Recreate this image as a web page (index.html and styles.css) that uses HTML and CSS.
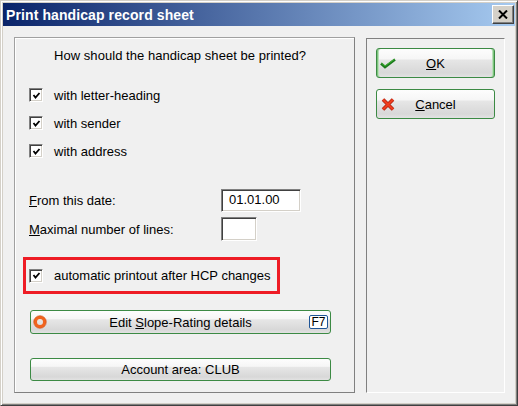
FILE: index.html
```html
<!DOCTYPE html>
<html lang="en">
<head>
  <meta charset="UTF-8" />
  <title>Print handicap record sheet</title>
  <link rel="stylesheet" href="styles.css">
</head>
<body>

  <div class="window">
    <div class="titlebar">
      <span class="title">Print handicap record sheet</span>
      <button class="close-btn" aria-label="Close">
        <svg width="10" height="9" viewBox="0 0 10 9">
          <path d="M1 0.5 L9 8.5 M9 0.5 L1 8.5" stroke="#000" stroke-width="2" fill="none"/>
        </svg>
      </button>
    </div>

    <div class="content">
      <div class="panel panel-main">
        <div class="question">How should the handicap sheet be printed?</div>

        <div class="options">
          <label class="check-row">
            <span class="checkbox"><svg width="9" height="9" viewBox="0 0 9 9"><path d="M1.5 4 L3.5 6.5 L7.5 2" stroke="#000" stroke-width="1.8" fill="none"/></svg></span>
            with letter-heading
          </label>
          <label class="check-row">
            <span class="checkbox"><svg width="9" height="9" viewBox="0 0 9 9"><path d="M1.5 4 L3.5 6.5 L7.5 2" stroke="#000" stroke-width="1.8" fill="none"/></svg></span>
            with sender
          </label>
          <label class="check-row">
            <span class="checkbox"><svg width="9" height="9" viewBox="0 0 9 9"><path d="M1.5 4 L3.5 6.5 L7.5 2" stroke="#000" stroke-width="1.8" fill="none"/></svg></span>
            with address
          </label>
        </div>

        <div class="field-row field-date">
          <span class="field-label"><u>F</u>rom this date:</span>
          <span class="input input-date">01.01.00</span>
        </div>
        <div class="field-row field-lines">
          <span class="field-label"><u>M</u>aximal number of lines:</span>
          <span class="input input-lines"></span>
        </div>

        <div class="highlight">
          <label class="check-row">
            <span class="checkbox"><svg width="9" height="9" viewBox="0 0 9 9"><path d="M1.5 4 L3.5 6.5 L7.5 2" stroke="#000" stroke-width="1.8" fill="none"/></svg></span>
            automatic printout after HCP changes
          </label>
        </div>

        <button class="btn btn-wide btn-slope">
          <svg class="ring" width="14" height="14" viewBox="0 0 14 14">
            <circle cx="7" cy="7" r="4.6" stroke="#f0641e" stroke-width="3.2" fill="none"/>
            <circle cx="7" cy="7" r="6.3" stroke="#d24a12" stroke-width="0.6" fill="none"/>
          </svg>
          <span>Edit <u>S</u>lope-Rating details</span>
          <span class="key">F7</span>
        </button>

        <button class="btn btn-wide btn-account">Account area: CLUB</button>
      </div>

      <div class="panel panel-side">
        <button class="btn btn-side btn-ok">
          <svg class="btn-icon" width="16" height="11" viewBox="0 0 16 11">
            <path d="M1 5.5 L5 9 L15 1.5" stroke="#1b7a1b" stroke-width="2.6" fill="none"/>
            <path d="M1.5 5.2 L5 8 L14.5 1.2" stroke="#4cbf3c" stroke-width="0.8" fill="none"/>
          </svg>
          <span><u>O</u>K</span>
        </button>
        <button class="btn btn-side btn-cancel">
          <svg class="btn-icon" width="14" height="13" viewBox="0 0 14 13">
            <path d="M2 1.5 L12 11.5 M12 1.5 L2 11.5" stroke="#a82010" stroke-width="3.6" fill="none"/>
            <path d="M2 1.5 L12 11.5 M12 1.5 L2 11.5" stroke="#f03c1c" stroke-width="2.2" fill="none"/>
          </svg>
          <span><u>C</u>ancel</span>
        </button>
      </div>
    </div>
  </div>

</body>
</html>
```

FILE: styles.css
```css
html, body {
  margin: 0;
  padding: 0;
}
body {
  font-family: "Liberation Sans", Arial, sans-serif;
  font-size: 13px;
  color: #000;
  background: #f0f0f0;
}
.window {
  box-sizing: border-box;
  width: 518px;
  height: 406px;
  display: flex;
  flex-direction: column;
  background: #f0f0f0;
  border-top: 1px solid #d4d0c8;
  border-left: 1px solid #d4d0c8;
  border-right: 1px solid #404040;
  border-bottom: 1px solid #404040;
  box-shadow: inset 1px 1px #fff, inset -1px -1px #808080, inset 2px 2px #d4d0c8, inset -2px -2px #d4d0c8;
  padding: 2px;
}
.titlebar {
  height: 23px;
  display: flex;
  align-items: center;
  justify-content: space-between;
  background: linear-gradient(to right, #0a246a, #a6caf0);
  padding: 0 1px 0 3px;
}
.title {
  color: #fff;
  font-weight: bold;
  font-size: 14px;
  letter-spacing: 0.1px;
}
.close-btn {
  box-sizing: border-box;
  width: 22px;
  height: 19px;
  padding: 0;
  margin: 0;
  display: flex;
  align-items: center;
  justify-content: center;
  background: #d4d0c8;
  border: 1px solid;
  border-color: #fff #404040 #404040 #fff;
  box-shadow: inset -1px -1px #808080;
}
.content {
  flex: 1;
  display: flex;
  gap: 11px;
  padding: 11px 10px 10px 11px;
}
.panel {
  box-sizing: border-box;
  border: 1px solid;
  border-color: #a0a0a0 #808080 #808080 #a0a0a0;
  box-shadow: inset 1px 1px #fff;
}
.panel-main {
  width: 341px;
  padding: 10px 0 0 14px;
  display: flex;
  flex-direction: column;
}
.panel-side {
  width: 139px;
  margin-top: 1px;
  border-color: #808080 #fff #fff #808080;
  box-shadow: none;
  padding: 9px 0 0 9px;
  display: flex;
  flex-direction: column;
  gap: 11px;
}
.question {
  line-height: 16px;
  padding-left: 25px;
  letter-spacing: 0.05px;
}
.options {
  display: flex;
  flex-direction: column;
  gap: 14px;
  margin-top: 24px;
}
.check-row {
  display: flex;
  align-items: center;
  gap: 11px;
  height: 14px;
}
.checkbox {
  box-sizing: border-box;
  width: 14px;
  height: 14px;
  display: flex;
  align-items: center;
  justify-content: center;
  background: #fff;
  border: 1px solid;
  border-color: #808080 #fff #fff #808080;
  box-shadow: inset 1px 1px #404040, inset -1px -1px #d4d0c8;
}
.field-row {
  display: flex;
  align-items: center;
}
.field-label {
  width: 192px;
}
.field-date {
  margin-top: 31px;
}
.field-lines {
  margin-top: 5px;
}
.input {
  box-sizing: border-box;
  background: #fff;
  border: 1px solid;
  border-color: #808080 #fff #fff #808080;
  box-shadow: inset 1px 1px #404040, inset -1px -1px #d4d0c8;
  padding: 0 0 0 7px;
  line-height: 20px;
}
.input-date {
  width: 80px;
  height: 23px;
}
.input-lines {
  width: 36px;
  height: 24px;
}
.highlight {
  box-sizing: border-box;
  width: 257px;
  height: 37px;
  margin: 16px 0 0 -6px;
  border: 3px solid #ee1c25;
  padding: 0 0 0 3px;
  display: flex;
  align-items: center;
}
.btn {
  box-sizing: border-box;
  font-family: "Liberation Sans", Arial, sans-serif;
  font-size: 13px;
  color: #000;
  border: 1px solid #3c8a44;
  border-radius: 3px;
  background: linear-gradient(to bottom, #fdfdfd 0%, #f6f6f6 35%, #e6e6e6 40%, #d8d8d8 85%, #e2e2e2 100%);
  padding: 0;
  margin: 0;
  display: flex;
  align-items: center;
  justify-content: center;
  position: relative;
}
.btn-wide {
  width: 301px;
  margin-left: 1px;
}
.btn-slope {
  height: 24px;
  margin-top: 16px;
}
.btn-account {
  height: 23px;
  margin-top: 24px;
}
.ring {
  position: absolute;
  left: 2px;
  top: 4px;
}
.key {
  position: absolute;
  right: 2px;
  top: 4px;
  box-sizing: border-box;
  width: 19px;
  height: 14px;
  border: 1px solid #1f5597;
  border-radius: 2px;
  background: #fff;
  font-size: 12px;
  line-height: 12px;
  text-align: center;
}
.btn-side {
  width: 119px;
  height: 30px;
}
.btn-ok {
  box-shadow: inset 1px 0 #7cc47c, inset -1px 0 #7cc47c, inset 2px 0 #b8e0b8, inset -2px 0 #b8e0b8;
}
.btn-icon {
  position: absolute;
  left: 3px;
  top: 9px;
}
.btn-cancel .btn-icon {
  left: 4px;
  top: 8px;
}
```
